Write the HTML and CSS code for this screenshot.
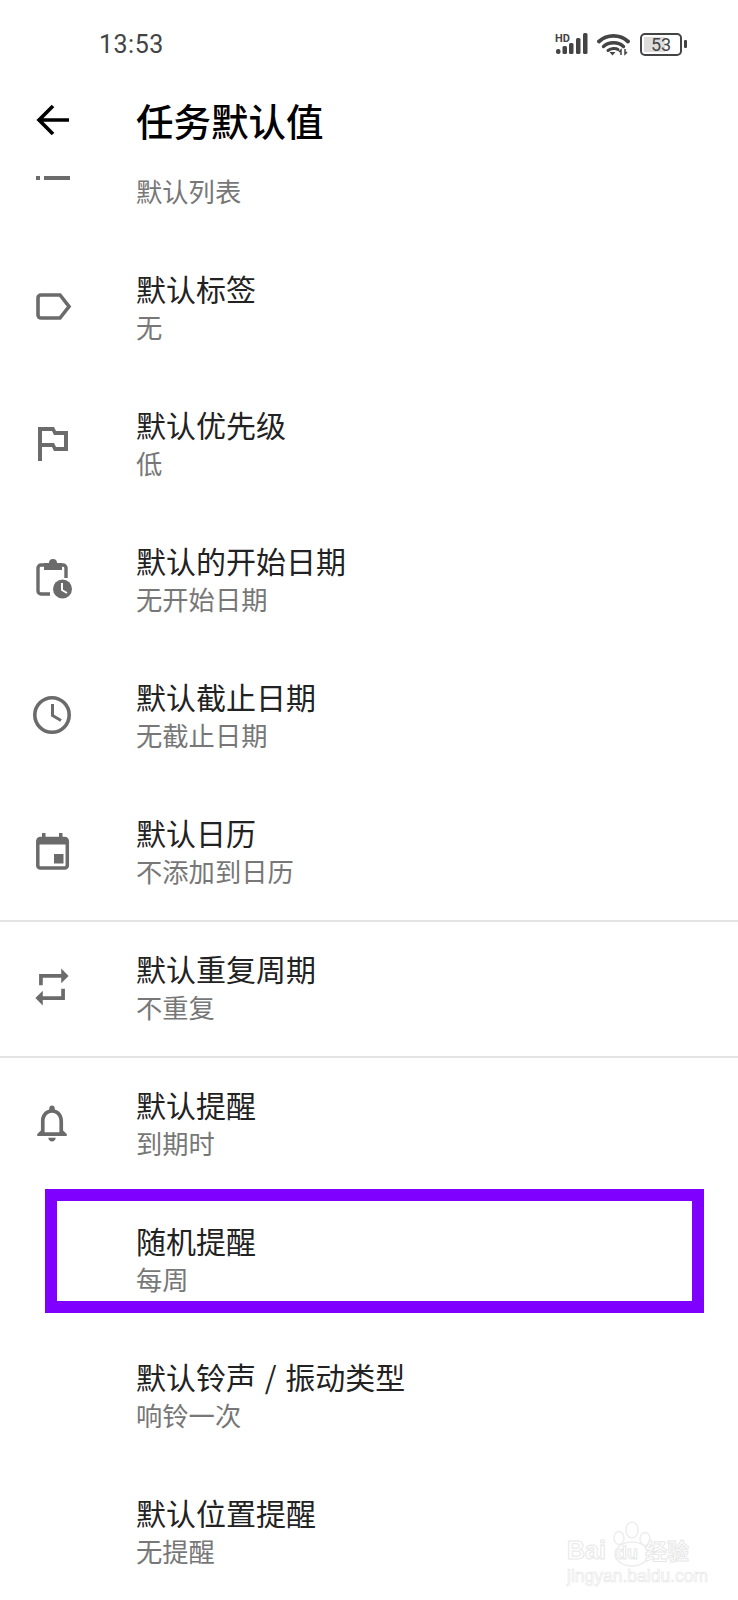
FILE: index.html
```html
<!DOCTYPE html>
<html>
<head>
  <title>任务默认值</title>
  <link rel="stylesheet" href="styles.css">
</head>
<body>
  <div class="app">
    <div class="status">
      <span class="clock">13:53</span>
      <div class="status-icons">
        <svg class="signal" width="34" height="22" viewBox="0 0 34 22">
          <text x="0" y="9" class="hd">HD</text>
          <rect x="1" y="16" width="4.500" height="5" rx="2"/>
          <rect x="7.500" y="13" width="4.500" height="8" rx="1.500"/>
          <rect x="14" y="10" width="4.500" height="11" rx="1.500"/>
          <rect x="21" y="5" width="4.500" height="16" rx="1.500"/>
          <rect x="28" y="0" width="4.500" height="21" rx="1.500"/>
        </svg>
        <svg class="wifi" width="33" height="24" viewBox="0 0 33 24">
          <path d="M2 9.5C10 2 23 2 31 9.5" fill="none" stroke="#444" stroke-width="3.800" stroke-linecap="round"/>
          <path d="M6.500 14.500C12 9.500 21 9.500 26.500 14.500" fill="none" stroke="#444" stroke-width="3.400" stroke-linecap="round"/>
          <path d="M11 18.500C14 16 19 16 21 17.500" fill="none" stroke="#444" stroke-width="3" stroke-linecap="round"/>
          <path d="M12.500 20h6l-3 3.500z" fill="#444"/>
          <path d="M24 23v-5l-2 2M28 17v5l2-2" fill="none" stroke="#444" stroke-width="1.500"/>
        </svg>
        <div class="battery">
          <div class="battery-body">
            <div class="battery-fill"></div>
            <span class="battery-num">53</span>
          </div>
          <div class="battery-nub"></div>
        </div>
      </div>
    </div>

    <div class="titlebar">
      <svg class="icon" width="48" height="48" viewBox="0 0 48 48">
        <path d="M41 26H12M25 12L11 26l14 14" fill="none" stroke="#000" stroke-width="3.600"/>
      </svg>
      <h1>任务默认值</h1>
    </div>

    <div class="list-clip">
      <div class="list">
        <div class="row">
          <svg class="icon" width="48" height="48" viewBox="0 0 48 48">
            <rect x="8" y="29" width="4" height="4"/>
            <rect x="16" y="29" width="26" height="4"/>
          </svg>
          <div class="text">
            <div class="name"></div>
            <div class="sub">默认列表</div>
          </div>
        </div>

        <div class="row">
          <svg class="icon" width="48" height="48" viewBox="0 0 48 48">
            <path d="M13 12h19l9 11.500-9 11.500H13a3 3 0 0 1-3-3V15a3 3 0 0 1 3-3z" fill="none" stroke="#6b6b6b" stroke-width="3.600"/>
          </svg>
          <div class="text">
            <div class="name">默认标签</div>
            <div class="sub">无</div>
          </div>
        </div>

        <div class="row">
          <svg class="icon" width="48" height="48" viewBox="0 0 24 24">
            <path d="M14 6l-1-2H5v17h2v-7h5l1 2h7V6h-6zm4 8h-4l-1-2H7V6h5l1 2h5v6z"/>
          </svg>
          <div class="text">
            <div class="name">默认优先级</div>
            <div class="sub">低</div>
          </div>
        </div>

        <div class="row">
          <svg class="icon" width="48" height="48" viewBox="0 0 48 48">
            <path d="M16 10h-3a3 3 0 0 0-3 3v23a3 3 0 0 0 3 3h9M32 10h3a3 3 0 0 1 3 3v10" fill="none" stroke="#6b6b6b" stroke-width="3.400"/>
            <path d="M16 8h5a4 4 0 0 1 8 0h5v7H16z"/>
            <circle cx="34.500" cy="34" r="9.500"/>
            <path d="M34 28v7l5 3" fill="none" stroke="#fff" stroke-width="2"/>
          </svg>
          <div class="text">
            <div class="name">默认的开始日期</div>
            <div class="sub">无开始日期</div>
          </div>
        </div>

        <div class="row">
          <svg class="icon" width="48" height="48" viewBox="0 0 48 48">
            <circle cx="24" cy="24" r="17.200" fill="none" stroke="#6b6b6b" stroke-width="3.600"/>
            <path d="M24.500 13v11.500l8.500 5" fill="none" stroke="#6b6b6b" stroke-width="3"/>
          </svg>
          <div class="text">
            <div class="name">默认截止日期</div>
            <div class="sub">无截止日期</div>
          </div>
        </div>

        <div class="row">
          <svg class="icon" width="48" height="48" viewBox="0 0 48 48">
            <rect x="9.800" y="11.500" width="29.500" height="29.500" rx="2.500" fill="none" stroke="#6b6b6b" stroke-width="3.500"/>
            <rect x="9" y="11" width="31" height="6.500"/>
            <rect x="14" y="6" width="3.500" height="6"/>
            <rect x="31" y="6" width="3.500" height="6"/>
            <rect x="26" y="27" width="9.500" height="9.500"/>
          </svg>
          <div class="text">
            <div class="name">默认日历</div>
            <div class="sub">不添加到日历</div>
          </div>
        </div>

        <div class="row split">
          <svg class="icon" width="48" height="48" viewBox="-1 -1 26 26">
            <path d="M7 7h10v3l4-4-4-4v3H5v6h2V7zm10 10H7v-3l-4 4 4 4v-3h12v-6h-2v4z"/>
          </svg>
          <div class="text">
            <div class="name">默认重复周期</div>
            <div class="sub">不重复</div>
          </div>
        </div>

        <div class="row">
          <svg class="icon" width="48" height="48" viewBox="-1 -1 26 26">
            <path d="M12 22c1.100 0 2-.9 2-2h-4c0 1.100.9 2 2 2zm6-6v-5c0-3.070-1.630-5.640-4.500-6.320V4c0-.83-.67-1.500-1.500-1.500s-1.500.67-1.500 1.500v.68C7.640 5.360 6 7.920 6 11v5l-2 2v1h16v-1l-2-2zm-2 1H8v-6c0-2.480 1.510-4.500 4-4.500s4 2.020 4 4.500v6z"/>
          </svg>
          <div class="text">
            <div class="name">默认提醒</div>
            <div class="sub">到期时</div>
          </div>
        </div>

        <div class="row">
          <div class="icon"></div>
          <div class="text">
            <div class="name">随机提醒</div>
            <div class="sub">每周</div>
          </div>
          <div class="mark"></div>
        </div>

        <div class="row">
          <div class="icon"></div>
          <div class="text">
            <div class="name">默认铃声 / 振动类型</div>
            <div class="sub">响铃一次</div>
          </div>
        </div>

        <div class="row">
          <div class="icon"></div>
          <div class="text">
            <div class="name">默认位置提醒</div>
            <div class="sub">无提醒</div>
          </div>
        </div>
      </div>
    </div>

    <div class="watermark">
      <svg class="paw" width="42" height="46" viewBox="0 0 42 46">
        <ellipse cx="8" cy="17" rx="5" ry="6.500"/>
        <ellipse cx="21" cy="9" rx="6" ry="8"/>
        <ellipse cx="34" cy="18" rx="5" ry="6.500"/>
        <ellipse cx="21" cy="33" rx="17" ry="12"/>
      </svg>
      <div class="wm-top">
        <span>Bai</span>
        <span class="wm-du">du</span>
        <span class="wm-cn">经验</span>
      </div>
      <div class="wm-url">jingyan.baidu.com</div>
    </div>
  </div>
</body>
</html>
```

FILE: styles.css
```css
html, body {
  margin: 0;
  padding: 0;
  background-color: #fff;
}
.app {
  position: relative;
  width: 738px;
  height: 1600px;
  overflow: hidden;
  display: flex;
  flex-direction: column;
  font-family: "Noto Sans CJK SC", "Noto Sans", sans-serif;
}
.status {
  height: 88px;
  flex: none;
  display: flex;
  justify-content: space-between;
  align-items: center;
  padding: 0 51px 0 99px;
  color: #444;
}
.clock {
  font-family: Roboto, sans-serif;
  font-size: 25px;
  letter-spacing: 0.5px;
}
.status-icons {
  display: flex;
  align-items: center;
  gap: 8px;
}
.signal {
  fill: #444;
}
.hd {
  font-family: Roboto, sans-serif;
  font-size: 11px;
  font-weight: 700;
}
.battery {
  display: flex;
  align-items: center;
  gap: 2px;
  margin-left: 2px;
}
.battery-body {
  position: relative;
  width: 38px;
  height: 19px;
  border: 2px solid #444;
  border-radius: 5px;
  display: flex;
  align-items: center;
  justify-content: center;
}
.battery-fill {
  position: absolute;
  left: 2px;
  top: 2px;
  bottom: 2px;
  width: 21px;
  background-color: #ddd;
}
.battery-num {
  position: relative;
  font-family: Roboto, sans-serif;
  font-size: 18px;
  line-height: 19px;
  color: #444;
}
.battery-nub {
  width: 3px;
  height: 8px;
  background-color: #444;
  border-radius: 1px;
}
.titlebar {
  height: 66px;
  flex: none;
  padding-bottom: 18px;
  display: flex;
  align-items: center;
  padding-left: 28px;
}
h1 {
  margin: 0 0 4px 60px;
  font-size: 37.5px;
  font-weight: 500;
  color: #000;
}
.list-clip {
  flex: 1;
  overflow: hidden;
}
.list {
  margin-top: -66px;
}
.row {
  position: relative;
  height: 136px;
  box-sizing: border-box;
  display: flex;
  align-items: center;
  padding-left: 28px;
}
.row.split {
  height: 138px;
  margin-top: -2px;
  padding-top: 2px;
  border-top: 2px solid #e4e4e4;
  border-bottom: 2px solid #e4e4e4;
}
.icon {
  flex: none;
  width: 48px;
  height: 48px;
  margin-bottom: 6px;
  fill: #6b6b6b;
}
.text {
  margin-left: 60px;
  margin-bottom: 6px;
}
.name {
  min-height: 40px;
  font-size: 30px;
  line-height: 40px;
  word-spacing: 2px;
  color: #222;
}
.sub {
  font-size: 26.3px;
  line-height: 38px;
  color: #777;
}
.mark {
  position: absolute;
  left: 45px;
  top: -5px;
  width: 659px;
  height: 124px;
  box-sizing: border-box;
  border: 12px solid #7f00ff;
}
.watermark {
  position: absolute;
  left: 567px;
  top: 1520px;
  width: 134px;
  height: 66px;
}
.paw {
  position: absolute;
  left: 44px;
  top: 1px;
  fill: #fff;
  stroke: #ededed;
  stroke-width: 1.500;
}
.wm-top {
  position: absolute;
  left: 0;
  top: 14px;
  display: flex;
  align-items: baseline;
  white-space: nowrap;
  font-family: "Liberation Sans", sans-serif;
  font-size: 25px;
  line-height: 30px;
  font-weight: 700;
  color: #fff;
  -webkit-text-stroke: 1px #e8e8e8;
}
.wm-du {
  font-size: 18px;
  margin-left: 10px;
}
.wm-cn {
  font-family: "Noto Sans CJK SC", sans-serif;
  font-size: 22px;
  margin-left: 7px;
}
.wm-url {
  position: absolute;
  left: 0;
  top: 46px;
  font-family: "Liberation Sans", sans-serif;
  font-size: 17.5px;
  line-height: 20px;
  white-space: nowrap;
  color: #fff;
  -webkit-text-stroke: 0.7px #e8e8e8;
}
```
